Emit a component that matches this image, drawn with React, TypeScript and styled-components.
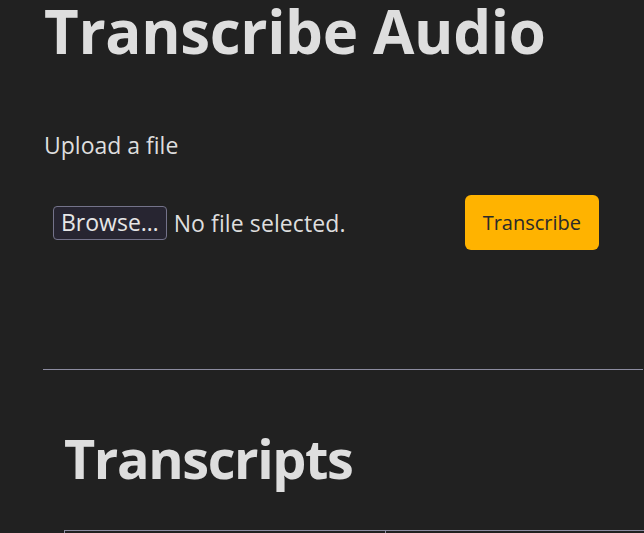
import { FC } from 'react'
import styled, { createGlobalStyle } from 'styled-components'

const GlobalStyle = createGlobalStyle`
  html, body {
    margin: 0;
    padding: 0;
    background-color: #212121;
    color: #dedede;
    font-family: 'Open Sans', 'Noto Sans', sans-serif;
  }
`

const App: FC = () => {
  return (
    <>
      <GlobalStyle />
      <Page>
        <Title>Transcribe Audio</Title>

        <UploadForm onSubmit={(e) => e.preventDefault()}>
          <Label htmlFor="audio">Upload a file</Label>
          <UploadRow>
            <FilePicker>
              <BrowseButton id="audio" type="button">Browse…</BrowseButton>
              <FileName>No file selected.</FileName>
            </FilePicker>
            <SubmitButton type="submit">Transcribe</SubmitButton>
          </UploadRow>
        </UploadForm>

        <Divider />

        <Transcripts>
          <SectionTitle>Transcripts</SectionTitle>
          <Table>
            <thead>
              <tr>
                <Th>File</Th>
                <Th>Transcript</Th>
              </tr>
            </thead>
          </Table>
        </Transcripts>
      </Page>
    </>
  )
}

export default App

const Page = styled.main`
  display: flex;
  flex-direction: column;
  padding: 0 0 0 44px;
  overflow: hidden;
`
const Title = styled.h1`
  margin: -5px 0 0;
  font-size: 60px;
  font-weight: 700;
  line-height: 72px;
  letter-spacing: -0.35px;
  white-space: nowrap;
`
const UploadForm = styled.form`
  display: flex;
  flex-direction: column;
  margin-top: 62px;
`
const Label = styled.label`
  font-size: 23px;
  line-height: 32px;
`
const UploadRow = styled.div`
  display: flex;
  align-items: center;
  justify-content: space-between;
  width: 546px;
  margin-top: 34px;
  padding-left: 9px;
`
const FilePicker = styled.div`
  display: flex;
  align-items: center;
  gap: 7px;
`
const BrowseButton = styled.button`
  height: 34px;
  padding: 0 7px;
  border: 1px solid #74738a;
  border-radius: 4px;
  background-color: #272531;
  color: #e6e6e6;
  font-family: inherit;
  font-size: 23px;
  line-height: 1;
`
const FileName = styled.span`
  font-size: 23px;
  letter-spacing: 0.1px;
`
const SubmitButton = styled.button`
  height: 55px;
  padding: 0 18px;
  border: none;
  border-radius: 6px;
  background-color: #ffb300;
  color: #2a2a2a;
  font-family: inherit;
  font-size: 20px;
`
const Divider = styled.hr`
  width: 100%;
  margin: 119px 0 0 -1px;
  border: none;
  border-top: 1px solid #8c8ca0;
`
const Transcripts = styled.section`
  padding-left: 20px;
`
const SectionTitle = styled.h2`
  margin: 52px 0 0;
  font-size: 54px;
  font-weight: 700;
  line-height: 72px;
  letter-spacing: -1.4px;
`
const Table = styled.table`
  width: 642px;
  margin-top: 36px;
  border-collapse: collapse;
`
const Th = styled.th`
  width: 50%;
  height: 44px;
  border: 1px solid #8c8ca0;
  font-size: 20px;
`
